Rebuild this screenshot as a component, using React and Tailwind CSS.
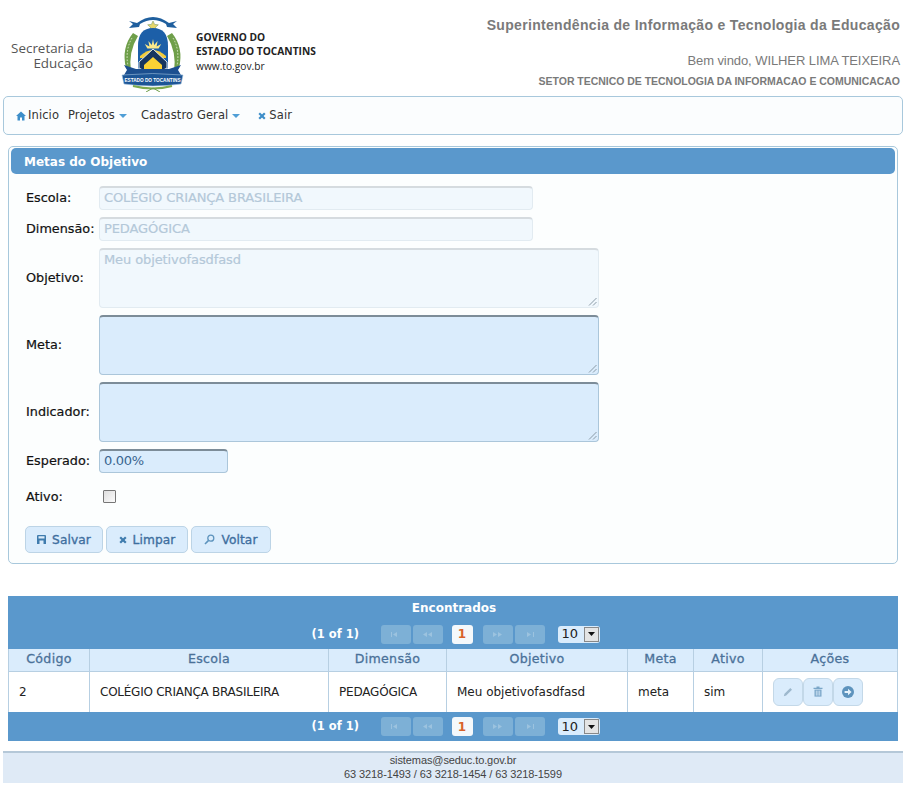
import React from "react";

const dv = "font-['DejaVu_Sans',sans-serif]";

function Logo() {
  return (
    <svg width="65" height="80" viewBox="0 0 65 80" className="shrink-0">
      {/* top ribbon */}
      <path d="M9 9 L17 11 Q33 -1 49 11 L57 9 L53 12 L57 16 L47 15 L46 12 Q33 4 20 12 L19 15 L9 16 L13 12 Z" fill="#1f5f9e" />
      <path d="M33 9 l1.6 3.4 3.7 .4 -2.8 2.5 .8 3.6 -3.3 -1.9 -3.3 1.9 .8 -3.6 -2.8 -2.5 3.7 -.4z" fill="#e5d66a" stroke="#7f9a6a" strokeWidth=".6" />
      {/* laurels */}
      <path d="M13 21 Q1 36 6 56 L11 60 Q8 40 18 24 Z" fill="#6f9f4a" />
      <path d="M52 21 Q64 36 59 56 L54 60 Q57 40 47 24 Z" fill="#6f9f4a" />
      <path d="M12 26 Q5 38 8 54 M53 26 Q60 38 57 54" stroke="#dbe8c8" strokeWidth="1" fill="none" strokeDasharray="1.6 1.6" />
      {/* shield */}
      <path d="M18 56 V34 Q18 16 33 16 Q48 16 48 34 V56 Q40 62 33 62 Q26 62 18 56 Z" fill="#1c5fa8" />
      <path d="M20 44 Q33 32 46 44 V46 H20 Z" fill="#f4cd3b" />
      <path d="M33 27 l1.2 6 3.4 -4 -1 5.4 4.6 -2.4 -2.6 4.6 H27.4 l-2.6 -4.6 4.6 2.4 -1 -5.4 3.4 4z" fill="#fbe98a" />
      <path d="M19 50 L33 37 L47 50 V56 Q40 61 33 61 Q26 61 19 56 Z" fill="#16365f" stroke="#dfe8ee" strokeWidth="1" />
      <path d="M24 53 L33 45 L42 53 V58 Q37 61 33 61 Q29 61 24 58 Z" fill="#fad234" />
      {/* side ribbons and lower ribbon */}
      <path d="M4 53 L16 57 H49 L61 53 L58 58 L61 63 H4 L7 58 Z" fill="#1c4f8f" />
      <path d="M2 63 Q33 60 63 63 L61 72 Q33 76 4 72 Z" fill="#1c5596" stroke="#9fc0dc" strokeWidth=".6" />
      <path d="M13 74 Q33 79 52 74" stroke="#7daa4f" strokeWidth="2" fill="none" />
      <path d="M26 80 L33 76 L40 80" stroke="#6f9f4a" strokeWidth="1" fill="none" />
      <text x="32.5" y="69.5" textAnchor="middle" fontSize="4.7" fontWeight="700" fill="#fff" fontFamily="Liberation Sans, sans-serif">ESTADO DO TOCANTINS</text>
    </svg>
  );
}

const Close = ({ c = "#3d8ec9" }) => (
  <svg width="8" height="8" viewBox="0 0 8 8" className="shrink-0">
    <path d="M1.2 1.2 L6.8 6.8 M6.8 1.2 L1.2 6.8" stroke={c} strokeWidth="2.2" />
  </svg>
);
const Caret = () => (
  <svg width="8" height="4" viewBox="0 0 8 4" className="ml-[4px] shrink-0">
    <path d="M0 0 H8 L4 4Z" fill="#4f9ed6" />
  </svg>
);
const Home = () => (
  <svg width="10" height="10" viewBox="0 0 10 10" className="shrink-0">
    <path d="M5 .5 L10 5 H8.5 V9.5 H6 V6.5 H4 V9.5 H1.5 V5 H0 Z" fill="#3d8ec9" />
  </svg>
);
const Disk = () => (
  <svg width="9" height="9" viewBox="0 0 9 9" className="shrink-0">
    <path d="M0 1 Q0 0 1 0 H8 Q9 0 9 1 V9 H0 Z" fill="#3f7cae" />
    <path d="M1.5 1.2 H7.5 V3.4 H1.5 Z M2.5 5.6 H6.5 V9 H2.5 Z" fill="#dcecfa" />
  </svg>
);
const Search = () => (
  <svg width="11" height="11" viewBox="0 0 11 11" className="shrink-0">
    <circle cx="6.8" cy="4.2" r="3" stroke="#5d93bd" strokeWidth="1.3" fill="none" />
    <path d="M4.6 6.4 L1 10" stroke="#5d93bd" strokeWidth="1.6" />
  </svg>
);
const Pencil = () => (
  <svg width="10" height="10" viewBox="0 0 10 10">
    <path d="M0.8 9.2 L1.5 6.8 L7.3 1 L9 2.7 L3.2 8.5 Z" fill="#9db8cd" />
  </svg>
);
const Trash = () => (
  <svg width="10" height="11" viewBox="0 0 10 11">
    <path d="M0.5 1.8 H9.5 V3 H0.5 Z M3.5 .4 H6.5 V1.8 H3.5 Z" fill="#7aa6c8" />
    <path d="M1.5 3.6 H8.5 V10.6 H1.5 Z" fill="#7aa6c8" />
    <path d="M3.3 4.6 V9.6 M5 4.6 V9.6 M6.7 4.6 V9.6" stroke="#dcecfa" strokeWidth=".8" />
  </svg>
);
const ArrowC = () => (
  <svg width="12" height="12" viewBox="0 0 12 12">
    <circle cx="6" cy="6" r="6" fill="#5d93bd" />
    <path d="M2.6 5 H6 V2.8 L9.6 6 L6 9.2 V7 H2.6 Z" fill="#e6f2fb" />
  </svg>
);
const Grip = () => (
  <svg width="9" height="9" viewBox="0 0 9 9" className="absolute right-[1px] bottom-[1px]">
    <path d="M8.5 1 L1 8.5 M8.5 5 L5 8.5" stroke="#8a9aa6" strokeWidth="1" />
  </svg>
);

function Row({ label, mt = "", children }) {
  return (
    <div className={`flex items-center ${mt}`}>
      <label className="w-[73px] text-[12.8px] text-[#111] [-webkit-text-stroke:0.2px]">{label}</label>
      {children}
    </div>
  );
}

const disabledBox =
  "bg-[#f1f8fd] border border-[#e2ebf1] border-t-2 border-t-[#d5dbdf] rounded-[4px] text-[#b4c8d9] text-[13px] tracking-[-0.1px] [-webkit-text-stroke:0.2px] px-[4px]";
const activeBox =
  "bg-[#daecfc] border border-[#abc6da] border-t-2 border-t-[#7c8c98] rounded-[4px] text-[13px] tracking-[-0.3px] text-[#39658f] px-[4px]";

function Btn({ icon, children, w }) {
  return (
    <button className={`${w} h-[27px] flex items-center justify-center gap-[6px] bg-[#daecfc] border border-[#bcd4e6] rounded-[5px] text-[12.2px] text-[#3f6f9f] tracking-[0.1px] [-webkit-text-stroke:0.35px]`}>
      {icon}
      <span>{children}</span>
    </button>
  );
}

function PagerBtn({ d }) {
  return (
    <span className="w-[30px] h-[19px] bg-[#7db0d6] rounded-[3px] flex items-center justify-center">
      <svg width="9" height="5" viewBox="0 0 9 5"><path d={d} fill="#9cc3df" /></svg>
    </span>
  );
}

function Pager({ h }) {
  return (
    <div className={`${h} bg-[#5a98cc] flex items-center justify-center text-white`}>
      <span className="text-[11.5px] font-bold ml-[5px] w-[68px] pt-[1px]">(1 of 1)</span>
      <span className="flex gap-[2px] ml-[1px]">
        <PagerBtn d="M0 0 H1 V5 H0 Z M6 0 V5 L2 2.5 Z" />
        <PagerBtn d="M4 0 V5 L0 2.5 Z M9 0 V5 L5 2.5 Z" />
      </span>
      <span className="ml-[9px] w-[21px] h-[19px] bg-[#f4f8fb] rounded-[3px] text-[#d9622b] text-[12px] font-bold flex items-center justify-center">1</span>
      <span className="flex gap-[2px] ml-[10px]">
        <PagerBtn d="M0 0 L4 2.5 L0 5 Z M5 0 L9 2.5 L5 5 Z" />
        <PagerBtn d="M2 0 L6 2.5 L2 5 Z M8 0 H9 V5 H8 Z" />
      </span>
      <span className="ml-[13px] w-[42px] h-[17px] bg-[#daecfc] rounded-[3px] flex items-center justify-between text-[13px] text-[#222] pl-[4px] pr-[1px]">
        10
        <span className="w-[15px] h-[15px] bg-[#e4e4e4] border border-[#888] flex items-center justify-center">
          <svg width="7" height="4" viewBox="0 0 7 4"><path d="M0 0 H7 L3.5 4Z" fill="#111" /></svg>
        </span>
      </span>
    </div>
  );
}

const th = "border-r border-[#b7cfe2] font-normal text-[12.6px] text-[#4a7199] tracking-[0.3px] [-webkit-text-stroke:0.3px] text-center align-middle p-0";
const td = "border-r border-[#b7cfe2] text-[12px] text-[#222] align-middle pl-[10px] p-0";

export default function App() {
  return (
    <div className={`w-[906px] px-[3px] bg-white ${dv}`}>
      {/* header */}
      <header className="h-[96px] flex justify-between">
        <div className="flex items-start">
          <div className="w-[90px] mt-[41px] text-right text-[13.4px] leading-[15px] text-[#555] font-['Open_Sans',sans-serif]">
            <div>Secretaria da</div>
            <div>Educação</div>
          </div>
          <div className="ml-[27px] mt-[12px]"><Logo /></div>
          <div className="ml-[11px] mt-[30px] text-[#222] font-['Open_Sans',sans-serif] text-[10.2px] leading-[14px]">
            <div className="font-bold">GOVERNO DO</div>
            <div className="font-bold">ESTADO DO TOCANTINS</div>
            <div className="mt-[1px]">www.to.gov.br</div>
          </div>
        </div>
        <div className="text-right font-['Liberation_Sans',sans-serif] text-[#7a7a7a] pr-[3px]">
          <div className="mt-[16px] text-[14px] font-bold leading-[18px] tracking-[0.32px]">Superintendência de Informação e Tecnologia da Educação</div>
          <div className="mt-[18px] text-[13px] leading-[18px] tracking-[-0.08px]">Bem vindo, WILHER LIMA TEIXEIRA</div>
          <div className="mt-[4px] text-[10.5px] font-bold leading-[14px] tracking-[-0.03px]">SETOR TECNICO DE TECNOLOGIA DA INFORMACAO E COMUNICACAO</div>
        </div>
      </header>

      {/* menu */}
      <nav className="h-[39px] bg-[#fbfdfe] border border-[#a8c8dc] rounded-[5px] flex items-center pl-[12px] text-[11.5px] text-[#333] tracking-[0.1px]">
        <Home /><span className="ml-[2px]">Inicio</span>
        <span className="ml-[9px]">Projetos</span><Caret />
        <span className="ml-[14px]">Cadastro Geral</span><Caret />
        <span className="ml-[18px]"><Close /></span><span className="ml-[3px]">Sair</span>
      </nav>

      {/* panel */}
      <section className="mx-[5px] mt-[11px] h-[418px] bg-[#fcfefe] border border-[#a8c8dc] rounded-[5px] px-[2px] pt-[1px]">
        <div className="h-[26px] bg-[#5a98cc] rounded-[5px] flex items-center pl-[13px] pt-[1px] text-white text-[12px] font-bold">Metas do Objetivo</div>
        <div className="pl-[15px] pt-[12px] flex flex-col">
          <Row label="Escola:"><div className={`${disabledBox} w-[434px] h-[24px] leading-[19px]`}>COLÉGIO CRIANÇA BRASILEIRA</div></Row>
          <Row label="Dimensão:" mt="mt-[7px]"><div className={`${disabledBox} w-[434px] h-[24px] leading-[19px]`}>PEDAGÓGICA</div></Row>
          <Row label="Objetivo:" mt="mt-[7px]"><div className={`${disabledBox} relative w-[500px] h-[60px] leading-[19px]`}>Meu objetivofasdfasd<Grip /></div></Row>
          <Row label="Meta:" mt="mt-[7px]"><div className={`${activeBox} relative w-[500px] h-[60px]`}><Grip /></div></Row>
          <Row label="Indicador:" mt="mt-[7px]"><div className={`${activeBox} relative w-[500px] h-[60px]`}><Grip /></div></Row>
          <Row label="Esperado:" mt="mt-[7px]"><div className={`${activeBox} w-[129px] h-[24px] leading-[19px]`}>0.00%</div></Row>
          <Row label="Ativo:" mt="mt-[14px]">
            <span className="ml-[4px] w-[13px] h-[13px] border border-[#767676] rounded-[1px] bg-gradient-to-br from-[#dedede] to-[#fbfbfb]" />
          </Row>
          <div className="mt-[20px] -ml-[1px] flex gap-[3px]">
            <Btn w="w-[78px]" icon={<Disk />}>Salvar</Btn>
            <Btn w="w-[82px]" icon={<Close c="#3f7cae" />}>Limpar</Btn>
            <Btn w="w-[80px]" icon={<Search />}>Voltar</Btn>
          </div>
        </div>
      </section>

      {/* datatable */}
      <section className="mx-[5px] mt-[32px] w-[890px]">
        <div className="h-[23px] bg-[#5a98cc] flex items-center justify-center text-white text-[12px] font-bold pl-[2px] pt-[1px]">Encontrados</div>
        <Pager h="h-[30px]" />
        <table className="w-full table-fixed border-collapse border-l border-[#b7cfe2] bg-white">
          <colgroup>
            <col className="w-[81px]" /><col className="w-[239px]" /><col className="w-[118px]" /><col className="w-[181px]" /><col className="w-[66px]" /><col className="w-[69px]" /><col />
          </colgroup>
          <thead>
            <tr className="h-[22px] bg-[#daecfc] border-b border-[#b7cfe2]">
              <th className={th}>Código</th><th className={th}>Escola</th><th className={th}>Dimensão</th><th className={th}>Objetivo</th><th className={th}>Meta</th><th className={th}>Ativo</th><th className={th}>Ações</th>
            </tr>
          </thead>
          <tbody>
            <tr className="h-[41px]">
              <td className={td}>2</td>
              <td className={`${td} tracking-[-0.25px]`}>COLÉGIO CRIANÇA BRASILEIRA</td>
              <td className={`${td} tracking-[-0.2px]`}>PEDAGÓGICA</td>
              <td className={td}>Meu objetivofasdfasd</td>
              <td className={td}>meta</td>
              <td className={td}>sim</td>
              <td className={`${td} pl-[9px]`}>
                <div className="flex">
                  {[<Pencil />, <Trash />, <ArrowC />].map((ic, i) => (
                    <span key={i} className="w-[30px] h-[28px] bg-[#daecfc] border border-[#c3d8e8] rounded-[6px] flex items-center justify-center">{ic}</span>
                  ))}
                </div>
              </td>
            </tr>
          </tbody>
        </table>
        <Pager h="h-[29px]" />
      </section>

      {/* footer */}
      <footer className="mt-[10px] h-[32px] bg-[#dfeaf6] border-t-2 border-[#b5c8d8] text-center font-['Liberation_Sans',sans-serif] text-[11px] leading-[14px] text-[#444] tracking-[-0.1px]">
        <div>sistemas@seduc.to.gov.br</div>
        <div>63 3218-1493 / 63 3218-1454 / 63 3218-1599</div>
      </footer>
    </div>
  );
}
